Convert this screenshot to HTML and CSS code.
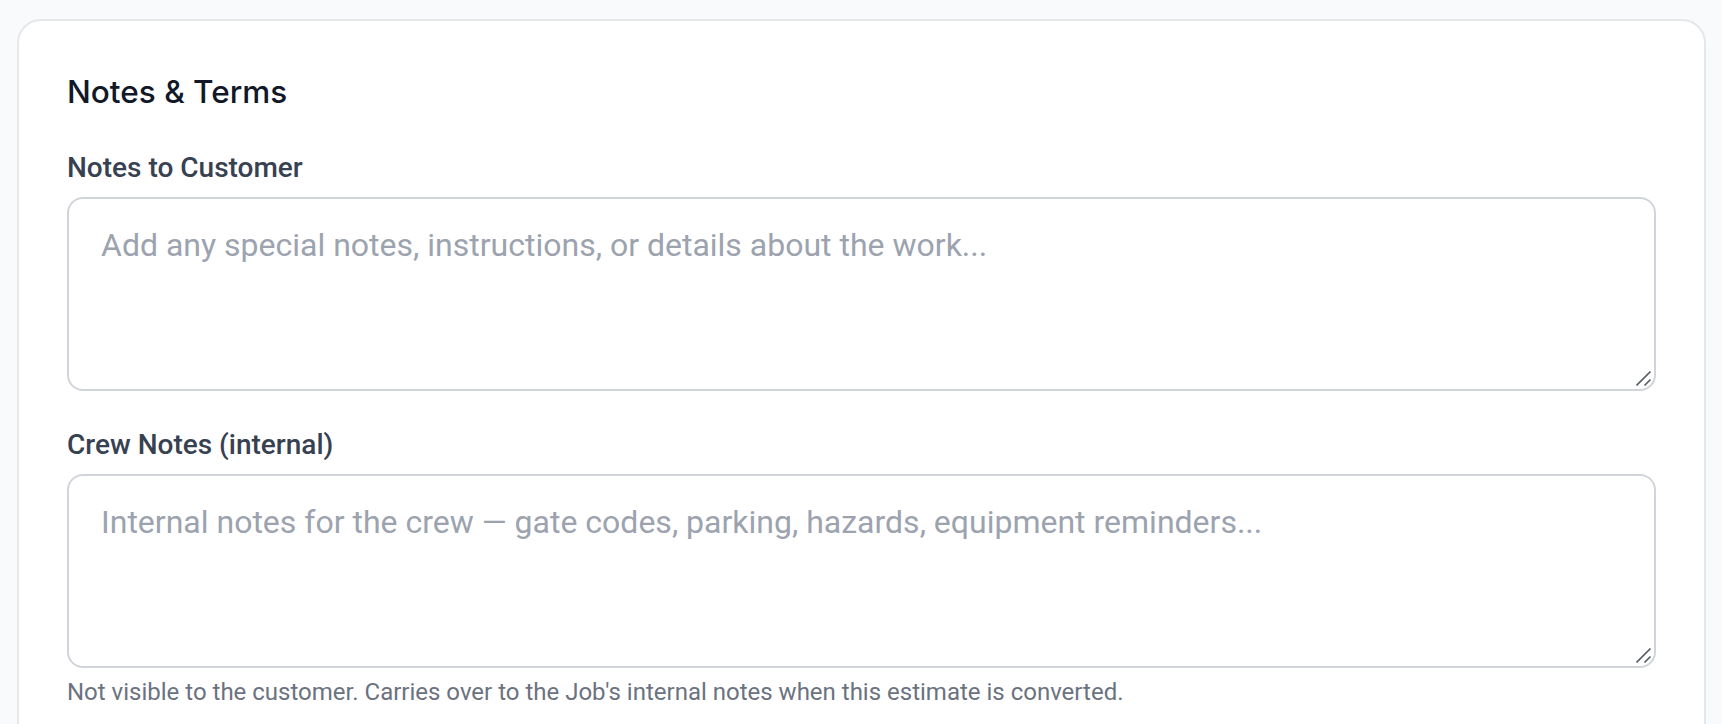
FILE: index.html
```html
<!DOCTYPE html>
<html lang="en">
<head>
<meta charset="utf-8">
<title>Notes &amp; Terms</title>
<link rel="stylesheet" href="styles.css">
</head>
<body>
<main class="page">
  <section class="card">
    <h2 class="card-title">Notes &amp; Terms</h2>
    <div class="field">
      <label class="field-label" for="notes-customer">Notes to Customer</label>
      <div class="input-wrap">
        <textarea id="notes-customer" class="field-input" placeholder="Add any special notes, instructions, or details about the work..."></textarea>
        <svg class="resize-grip" width="16" height="16" viewBox="0 0 16 16" aria-hidden="true"><path d="M0.5 14.5 L14.5 0.5 M8.5 14.5 L14.5 8.5" stroke="#555b63" stroke-width="1.6" stroke-linecap="butt" fill="none"/></svg>
      </div>
    </div>
    <div class="field">
      <label class="field-label" for="notes-crew">Crew Notes (internal)</label>
      <div class="input-wrap">
        <textarea id="notes-crew" class="field-input" placeholder="Internal notes for the crew — gate codes, parking, hazards, equipment reminders..."></textarea>
        <svg class="resize-grip" width="16" height="16" viewBox="0 0 16 16" aria-hidden="true"><path d="M0.5 14.5 L14.5 0.5 M8.5 14.5 L14.5 8.5" stroke="#555b63" stroke-width="1.6" stroke-linecap="butt" fill="none"/></svg>
      </div>
      <p class="field-help">Not visible to the customer. Carries over to the Job's internal notes when this estimate is converted.</p>
    </div>
  </section>
</main>
</body>
</html>
```

FILE: styles.css
```css
html, body {
  margin: 0;
  padding: 0;
  height: 100%;
  overflow: hidden;
  background: #f9fafb;
}

.page {
  padding: 19px 16px 0 17px;
  font-family: Roboto, "Liberation Sans", sans-serif;
}

.card {
  background: #ffffff;
  border: 2px solid #e5e7eb;
  border-radius: 24px;
  padding: 48px 48px 48px 48px;
  display: flex;
  flex-direction: column;
  gap: 32px;
}

.card-title {
  margin: 0;
  font-family: Inter, "Open Sans", sans-serif;
  font-size: 31.5px;
  line-height: 45px;
  font-weight: 500;
  color: #111827;
}

.field {
  display: flex;
  flex-direction: column;
}

.field-label {
  font-family: Roboto, sans-serif;
  font-size: 28px;
  line-height: 40px;
  font-weight: 500;
  color: #374151;
  padding-top: 2px;
  margin-bottom: 9px;
}

.input-wrap {
  position: relative;
}

.field-input {
  box-sizing: border-box;
  display: block;
  width: 100%;
  height: 194px;
  margin: 0;
  padding: 22px 32px 20px 32px;
  border: 2px solid #d1d5db;
  border-radius: 16px;
  background: #ffffff;
  font-family: Roboto, sans-serif;
  font-size: 32px;
  line-height: 48px;
  color: #111827;
  resize: none;
  outline: none;
}

.field-input::placeholder {
  color: #9ca3af;
  opacity: 1;
}

.resize-grip {
  position: absolute;
  right: 4px;
  bottom: 4px;
  pointer-events: none;
}

.field-help {
  margin: 8px 0 0 0;
  font-family: Roboto, sans-serif;
  font-size: 24px;
  line-height: 32px;
  color: #6b7280;
}
```
